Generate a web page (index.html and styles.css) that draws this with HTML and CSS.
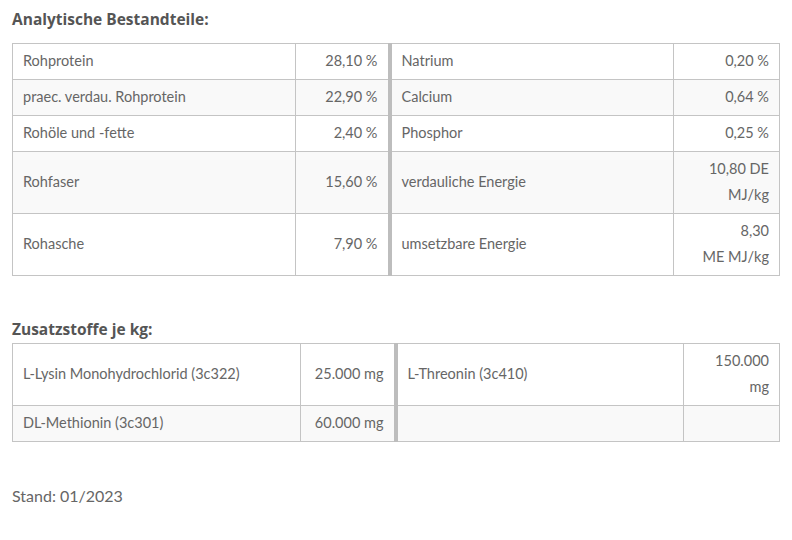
FILE: index.html
```html
<!DOCTYPE html>
<html lang="de">
<head>
<meta charset="utf-8">
<title>Analytische Bestandteile</title>
<link rel="stylesheet" href="styles.css">
</head>
<body>
<h2 class="heading heading-first">Analytische Bestandteile:</h2>
<table class="data data-a">
  <colgroup>
    <col class="a1"><col class="a2"><col class="a3"><col class="a4">
  </colgroup>
  <tbody>
    <tr><td>Rohprotein</td><td class="num">28,10 %</td><td class="sep">Natrium</td><td class="num">0,20 %</td></tr>
    <tr><td>praec. verdau. Rohprotein</td><td class="num">22,90 %</td><td class="sep">Calcium</td><td class="num">0,64 %</td></tr>
    <tr><td>Rohöle und -fette</td><td class="num">2,40 %</td><td class="sep">Phosphor</td><td class="num">0,25 %</td></tr>
    <tr><td>Rohfaser</td><td class="num">15,60 %</td><td class="sep">verdauliche Energie</td><td class="num">10,80 DE<br>MJ/kg</td></tr>
    <tr><td>Rohasche</td><td class="num">7,90 %</td><td class="sep">umsetzbare Energie</td><td class="num">8,30<br>ME MJ/kg</td></tr>
  </tbody>
</table>

<h2 class="heading heading-second">Zusatzstoffe je kg:</h2>
<table class="data data-b">
  <colgroup>
    <col class="b1"><col class="b2"><col class="b3"><col class="b4">
  </colgroup>
  <tbody>
    <tr><td>L-Lysin Monohydrochlorid (3c322)</td><td class="num">25.000 mg</td><td class="sep">L-Threonin (3c410)</td><td class="num">150.000<br>mg</td></tr>
    <tr><td>DL-Methionin (3c301)</td><td class="num">60.000 mg</td><td class="sep"></td><td class="num"></td></tr>
  </tbody>
</table>

<p class="stand">Stand: 01/2023</p>
</body>
</html>
```

FILE: styles.css
```css
html, body {
  margin: 0;
  background: #ffffff;
}
body {
  padding: 9px 12px 0 12px;
  font-family: "Lato", "Open Sans", "Liberation Sans", sans-serif;
  color: #666666;
  font-size: 14.5px;
}
.heading {
  margin: 0;
  font-family: "Open Sans", "Lato", "Liberation Sans", sans-serif;
  font-size: 15.5px;
  line-height: 20px;
  font-weight: 700;
  color: #555555;
}
.heading-first { margin-bottom: 14px; }
.heading-second { margin-top: 43px; margin-bottom: 4px; }

.data {
  width: 767px;
  border-collapse: collapse;
  table-layout: fixed;
}
.data td {
  border: 1px solid #c4c4c4;
  padding: 4px 10px 5px 10px;
  line-height: 26px;
  vertical-align: middle;
  text-align: left;
}
.data tr:nth-child(even) td { background: #f9f9f9; }
.data td.num { text-align: right; }
.data td.sep { border-left: 4px solid #bdbdbd; }

.a1 { width: 283px; }
.a2 { width: 94px; }
.a3 { width: 284px; }
.a4 { width: 106px; }

.b1 { width: 288px; }
.b2 { width: 95px; }
.b3 { width: 288px; }
.b4 { width: 96px; }

.stand {
  margin: 44px 0 0 0;
  font-size: 16px;
  line-height: 20px;
  color: #666666;
}
```
